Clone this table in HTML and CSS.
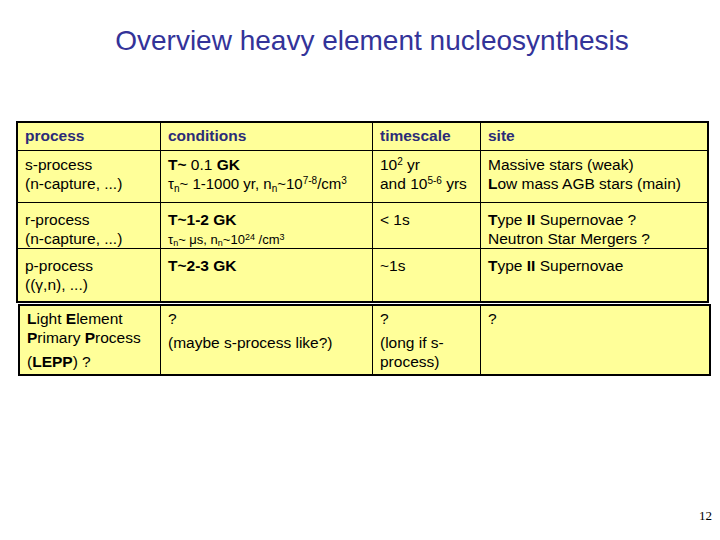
FILE: index.html
```html
<!DOCTYPE html>
<html>
<head>
<meta charset="utf-8">
<link rel="stylesheet" href="styles.css">
</head>
<body>
<div class="slide">
  <h1 class="title">Overview heavy element nucleosynthesis</h1>
  <div class="tbl t1">
    <div class="c h">process</div>
    <div class="c h">conditions</div>
    <div class="c h">timescale</div>
    <div class="c h last">site</div>

    <div class="c r1">s-process<br>(n-capture, ...)</div>
    <div class="c r1"><b>T~</b> 0.1 <b>GK</b><br><span class="md">&tau;<sub>n</sub>~ 1-1000 yr, n<sub>n</sub>~10<sup>7-8</sup>/cm<sup>3</sup></span></div>
    <div class="c r1">10<sup>2</sup> yr<br>and 10<sup>5-6</sup> yrs</div>
    <div class="c r1 last">Massive stars (weak)<br><b>L</b>ow mass AGB stars (main)</div>

    <div class="c r2">r-process<br>(n-capture, ...)</div>
    <div class="c r2"><b>T~1-2 GK</b><br><span class="sm">&tau;<sub>n</sub>~ &mu;s, n<sub>n</sub>~10<sup>24</sup> /cm<sup>3</sup></span></div>
    <div class="c r2">&lt; 1s</div>
    <div class="c r2 last"><b>T</b>ype <b>II</b> Supernovae ?<br>Neutron Star Mergers ?</div>

    <div class="c r3 bot">p-process<br>((&gamma;,n), ...)</div>
    <div class="c r3 bot"><b>T~2-3 GK</b></div>
    <div class="c r3 bot">~1s</div>
    <div class="c r3 bot last"><b>T</b>ype <b>II</b> Supernovae</div>
  </div>
  <div class="tbl t2">
    <div class="c r4"><span class="ln"><b>L</b>ight <b>E</b>lement</span><span class="ln"><b>P</b>rimary <b>P</b>rocess</span><span class="ln l3">(<b>LEPP</b>) ?</span></div>
    <div class="c r4"><span class="ln">?</span><span class="ln l2">(maybe s-process like?)</span></div>
    <div class="c r4"><span class="ln">?</span><span class="ln l2">(long if s-</span><span class="ln">process)</span></div>
    <div class="c r4 last"><span class="ln">?</span></div>
  </div>
  <div class="pagenum">12</div>
</div>
</body>
</html>
```
FILE: styles.css
```css
html, body {
  margin: 0;
  padding: 0;
  background: #ffffff;
}
.slide {
  width: 720px;
  height: 540px;
  position: relative;
  font-family: "Liberation Sans", Arial, sans-serif;
  color: #000;
}
.title {
  margin: 0;
  padding: 25px 0 0 24px;
  height: 97px;
  box-sizing: border-box;
  text-align: center;
  font-weight: normal;
  font-size: 28px;
  line-height: 32px;
  color: #333399;
}
.tbl {
  display: grid;
  border: 2px solid #000;
  background: #ffff99;
  box-sizing: border-box;
}
.t1 {
  margin: 24px 0 0 16px;
  width: 693px;
  grid-template-columns: 143px 212px 108px 226px;
  grid-template-rows: 28px 52px 46px 52px;
}
.t2 {
  margin: 1px 0 0 18px;
  width: 693px;
  height: 72px;
  grid-template-columns: 141px 212px 108px 228px;
}
.c {
  border-right: 1px solid #000;
  border-bottom: 1px solid #000;
  padding: 4px 4px 0 7px;
  font-size: 15.5px;
  line-height: 19px;
  box-sizing: border-box;
  white-space: nowrap;
}
.c.r2, .c.r3 { padding-top: 7px; }
.c.last { border-right: none; }
.c.bot { border-bottom: none; }
.t2 .c { border-bottom: none; padding-top: 3px; }
.h {
  font-weight: bold;
  color: #2b2b78;
  padding-top: 3px;
}
.c b { font-weight: bold; }
.md { font-size: 15px; }
.sm { font-size: 13px; }
sub, sup { font-size: 10px; line-height: 0; }
sup { vertical-align: 5px; }
sub { vertical-align: -3px; }
.sm sup { font-size: 9px; vertical-align: 4px; }
.sm sub { font-size: 9px; vertical-align: -2px; }
.ln { display: block; }
.l2 { margin-top: 5px; }
.l3 { margin-top: 5px; }
.pagenum {
  position: absolute;
  left: 699px;
  top: 508px;
  font-family: "Liberation Serif", "Times New Roman", serif;
  font-size: 13px;
}
```
